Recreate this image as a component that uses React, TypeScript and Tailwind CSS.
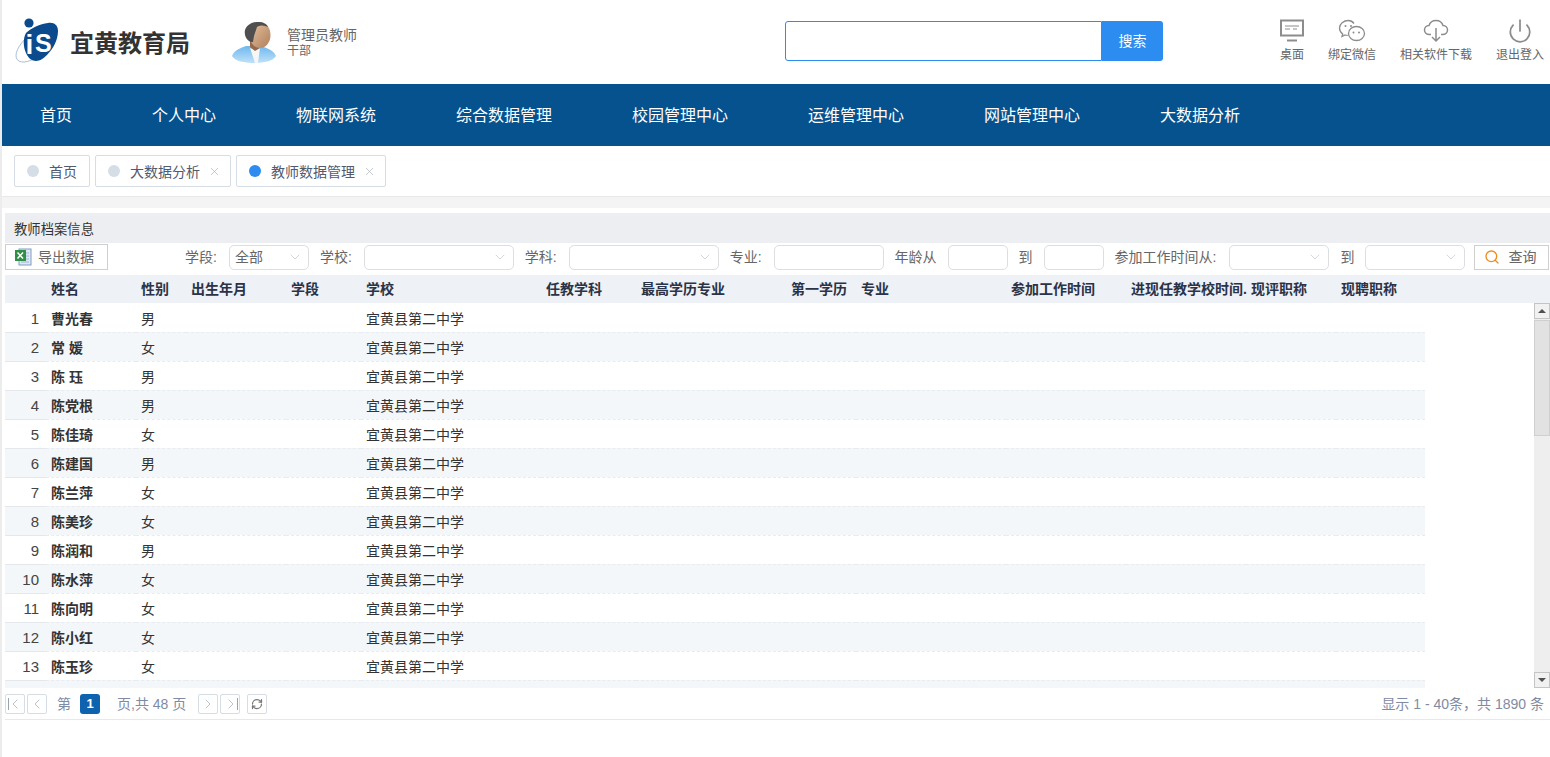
import { ChevronDown, ChevronLeft, ChevronRight, Power, RefreshCw, Search, X } from "lucide-react";

const font = { fontFamily: '"Liberation Sans", "Noto Sans CJK SC", sans-serif' };

const navItems = ["首页", "个人中心", "物联网系统", "综合数据管理", "校园管理中心", "运维管理中心", "网站管理中心", "大数据分析"];

const columns = [
  { label: "", w: 41 },
  { label: "姓名", w: 90 },
  { label: "性别", w: 50 },
  { label: "出生年月", w: 100 },
  { label: "学段", w: 75 },
  { label: "学校", w: 180 },
  { label: "任教学科", w: 95 },
  { label: "最高学历专业", w: 150 },
  { label: "第一学历", w: 70 },
  { label: "专业", w: 150 },
  { label: "参加工作时间", w: 120 },
  { label: "进现任教学校时间.", w: 120 },
  { label: "现评职称", w: 90 },
  { label: "现聘职称", w: 89 },
];

const teachers: [string, string][] = [
  ["曹光春", "男"],
  ["常 媛", "女"],
  ["陈 珏", "男"],
  ["陈党根", "男"],
  ["陈佳琦", "女"],
  ["陈建国", "男"],
  ["陈兰萍", "女"],
  ["陈美珍", "女"],
  ["陈润和", "男"],
  ["陈水萍", "女"],
  ["陈向明", "女"],
  ["陈小红", "女"],
  ["陈玉珍", "女"],
];

function Logo() {
  return (
    <svg width="48" height="48" viewBox="0 0 48 48" className="shrink-0">
      <ellipse cx="23" cy="29" rx="23" ry="11" transform="rotate(-40 23 29)" fill="none" stroke="#9db4cc" strokeWidth="0.8" />
      <path d="M14 17c5-5 14-9 22-10 6-1 10 2 10 8 0 9-5 18-11 24-3 3-7 6-11 6-4 0-8-3-10-8-3-6-3-15 0-20z" fill="#0b4a8c" />
      <circle cx="17" cy="7" r="4.600" fill="#0b4a8c" />
      <text x="13.500" y="38" fontSize="28" fontWeight="700" fill="#fff" style={{ fontFamily: '"Liberation Sans", sans-serif' }}>i</text>
      <text x="23" y="36" fontSize="25" fontWeight="700" fill="#fff" style={{ fontFamily: '"Liberation Sans", sans-serif' }}>S</text>
    </svg>
  );
}

function Avatar() {
  return (
    <svg width="44" height="44" viewBox="0 0 44 44" className="shrink-0">
      <defs>
        <linearGradient id="skin" x1="0" y1="0" x2="1" y2="1">
          <stop offset="0" stopColor="#e6c4a2" />
          <stop offset="1" stopColor="#b07f5a" />
        </linearGradient>
        <linearGradient id="shirt" x1="0" y1="0" x2="0" y2="1">
          <stop offset="0" stopColor="#6db8ee" />
          <stop offset="1" stopColor="#c0e1f8" />
        </linearGradient>
      </defs>
      <path d="M0 35c2-6 9-8 14-10h15c5 2 13 4 15 10-3 5-12 7-22 7S3 40 0 35z" fill="url(#shirt)" />
      <path d="M18 27l5 15h3l2-15-5 2z" fill="#f6f6f6" />
      <path d="M18 19h10v8l-5 3-5-4z" fill="#96694a" />
      <ellipse cx="28" cy="14" rx="10.500" ry="13" fill="url(#skin)" />
      <path d="M17 20c-3-2-5-6-4-11 2-5 7-8 13-8 5 0 9 2 10 5-4-2-8-2-11 0-1 3-2 6-3 9l-1 6c-2 0-3 0-4-1z" fill="#4f4f4f" />
    </svg>
  );
}

function HeaderIcon({ label, children }: { label: string; children: React.ReactNode }) {
  return (
    <div className="flex flex-col items-center">
      <div className="h-[27px] flex items-center justify-center text-[#8c8c8c]">{children}</div>
      <span className="text-[12px] leading-[16px] text-[#666] mt-[3px]">{label}</span>
    </div>
  );
}

function Tab({ label, active, closable }: { label: string; active?: boolean; closable?: boolean }) {
  return (
    <div className="h-8 flex items-center border border-[#d7dde4] rounded-[2px] bg-white pl-3 pr-3">
      <span className={active ? "w-3 h-3 rounded-full bg-[#2d8cf0]" : "w-3 h-3 rounded-full bg-[#d5dee6]"} />
      <span className="ml-[10px] mt-[3px] text-[14px] text-[#515a6e]">{label}</span>
      {closable && <X className="ml-2 w-[13px] h-[13px] text-[#a8aeb8] -mr-[3px]" strokeWidth={1.2} />}
    </div>
  );
}

function Label({ extra, children }: { extra?: string; children: React.ReactNode }) {
  return <span className={`text-[14px] text-[#666] whitespace-nowrap ${extra ?? ""}`}>{children}</span>;
}

function Select({ width, value }: { width: string; value?: string }) {
  return (
    <div className={`${width} h-[25px] flex items-center justify-between border border-[#dddee1] rounded-[5px] bg-white pl-[5px] pr-[5px] text-[14px] text-[#666]`}>
      <span>{value}</span>
      <ChevronDown className="w-4 h-4 text-[#c9cdd8]" strokeWidth={1.2} />
    </div>
  );
}

function TextBox({ width }: { width: string }) {
  return <div className={`${width} h-[25px] border border-[#dddee1] rounded-[5px] bg-white`} />;
}

function PageButton({ children }: { children: React.ReactNode }) {
  return <div className="w-5 h-5 flex items-center justify-center border border-[#d7dde4] rounded-[2px] text-[#9aa3b2]">{children}</div>;
}

function ScrollArrow({ up }: { up?: boolean }) {
  return (
    <div className="h-4 shrink-0 flex items-center justify-center bg-[#f1f1f1] border border-[#c4c4c4]">
      <span className={up ? "border-x-[4px] border-x-transparent border-b-[4px] border-b-[#505050]" : "border-x-[4px] border-x-transparent border-t-[4px] border-t-[#505050]"} />
    </div>
  );
}

export default function App() {
  return (
    <div style={font} className="h-[757px] w-[1550px] overflow-hidden bg-white border-l-2 border-[#ececec] flex flex-col">
      <header className="h-[84px] shrink-0 flex items-center">
        <div className="ml-[10px] -mt-[4px]"><Logo /></div>
        <h1 className="ml-[10px] text-[24px] font-bold text-[#333] whitespace-nowrap mt-[4px]">宜黄教育局</h1>
        <div className="ml-[42px] mt-[1px]"><Avatar /></div>
        <div className="ml-[11px] text-[14px] leading-[16px] text-[#666] mt-[2px]">
          <div>管理员教师</div>
          <div className="text-[12px]">干部</div>
        </div>
        <div className="ml-[428px] w-[378px] h-10 flex -mt-[2px]">
          <div className="flex-1 border border-[#2d8cf0] rounded-l-[3px]" />
          <button className="w-[61px] bg-[#2d8cf0] text-white text-[14px] rounded-r-[3px]">搜索</button>
        </div>
        <div className="ml-auto mr-[6px] flex gap-6 -mt-[4px]">
          <HeaderIcon label="桌面">
            <svg width="24" height="24" viewBox="0 0 24 24" fill="none" stroke="currentColor">
              <rect x="1" y="1.500" width="22" height="15" strokeWidth="2" />
              <path d="M5 7h14M5 10h5M13 10h4" strokeWidth="1.200" />
              <path d="M7 21.500h10" strokeWidth="2" />
            </svg>
          </HeaderIcon>
          <HeaderIcon label="绑定微信">
            <svg width="28" height="24" viewBox="0 0 28 24" fill="none" stroke="currentColor" strokeWidth="1.300">
              <path d="M16 4.500C14.500 2.500 12.500 1.500 10.500 1.500 5.500 1.500 1.500 5 1.500 9c0 2.500 1.200 4.500 3.200 6l-.7 2.500 3-1.500c1 .3 1.800.4 2.800.4" />
              <ellipse cx="18.500" cy="14.500" rx="8" ry="7" fill="#fff" />
              <circle cx="7.500" cy="7" r="1" fill="currentColor" stroke="none" />
              <circle cx="13" cy="7" r="1" fill="currentColor" stroke="none" />
              <circle cx="15.500" cy="13.500" r="1" fill="currentColor" stroke="none" />
              <circle cx="21" cy="13.500" r="1" fill="currentColor" stroke="none" />
            </svg>
          </HeaderIcon>
          <HeaderIcon label="相关软件下载">
            <svg width="26" height="24" viewBox="0 0 26 24" fill="none" stroke="currentColor" strokeWidth="1.500">
              <path d="M8 15.500H6.500C3.500 15.500 1.500 13.500 1.500 11s2-4.500 4.500-4.500C7 3.500 9.500 1.500 13 1.500s6 2 7 5c2.500 0 4.500 2 4.500 4.500s-2 4.500-5 4.500H18" />
              <path d="M13 9v13M9 18l4 4 4-4" />
            </svg>
          </HeaderIcon>
          <HeaderIcon label="退出登入">
            <Power className="w-[26px] h-[26px]" strokeWidth={1.600} />
          </HeaderIcon>
        </div>
      </header>

      <nav className="h-[62px] shrink-0 bg-[#05528f] flex items-center pl-[38px] gap-20 pt-[1px]">
        {navItems.map((item) => (
          <a key={item} className="text-[16px] text-white whitespace-nowrap">{item}</a>
        ))}
      </nav>

      <div className="h-[51px] shrink-0 flex items-center pl-3 gap-[5px] border-b border-[#e8e8e8]">
        <Tab label="首页" />
        <Tab label="大数据分析" closable />
        <Tab label="教师数据管理" active closable />
      </div>
      <div className="h-[11px] shrink-0 bg-[#f4f4f4]" />

      <main className="flex-1 min-h-0 flex flex-col pt-[5px] pl-[3px]">
        <div className="h-[30px] shrink-0 flex items-center bg-[#eceef2] pl-[9px] pt-[3px] text-[13.33px] text-[#333]">教师档案信息</div>

        <div className="h-[32px] shrink-0 flex items-center gap-[11px] pb-[5px] pt-[1px]">
          <button className="w-[103px] h-[26px] shrink-0 flex items-center border border-[#cfcfcf] pl-2 mr-[66px]">
            <svg width="18" height="18" viewBox="0 0 18 18">
              <rect x="5" y="1" width="12" height="16" fill="#dfe8f6" stroke="#7f9cc4" />
              <path d="M7 5h8M7 8h8M7 11h8M7 14h8" stroke="#9db4d4" />
              <rect x="1" y="2" width="11" height="11" fill="#2f8f46" />
              <path d="M3.500 4.500l5.500 6M9 4.500l-5.500 6" stroke="#fff" strokeWidth="1.500" />
            </svg>
            <span className="ml-[6px] text-[14px] text-[#666]">导出数据</span>
          </button>
          <Label extra="pr-px">学段:</Label>
          <Select width="w-[80px]" value="全部" />
          <Label extra="pr-px">学校:</Label>
          <Select width="w-[150px]" />
          <Label extra="pr-px">学科:</Label>
          <Select width="w-[150px]" />
          <Label extra="pr-px">专业:</Label>
          <TextBox width="w-[110px]" />
          <Label>年龄从</Label>
          <TextBox width="w-[60px]" />
          <Label>到</Label>
          <TextBox width="w-[60px]" />
          <Label extra="pr-[2px]">参加工作时间从:</Label>
          <Select width="w-[100px]" />
          <Label>到</Label>
          <Select width="w-[100px]" />
          <button className="w-[75px] h-[25px] shrink-0 -ml-[2px] flex items-center border border-[#cfcfcf] pl-[9px]">
            <Search className="w-4 h-4 text-[#f08a1d]" strokeWidth={2} />
            <span className="ml-[8px] text-[14px] text-[#666]">查询</span>
          </button>
        </div>

        <table className="w-[1545px] shrink-0 table-fixed border-collapse bg-[#eef1f5]">
          <colgroup>
            {columns.map((c, i) => (
              <col key={i} style={{ width: c.w }} />
            ))}
            <col />
          </colgroup>
          <thead>
            <tr className="h-[28px]">
              {columns.map((c, i) => (
                <th key={i} className="px-[5px] text-left text-[14px] font-bold text-[#2a3347] whitespace-nowrap">
                  {c.label}
                </th>
              ))}
              <th />
            </tr>
          </thead>
        </table>

        <div className="h-[385px] shrink-0 flex overflow-hidden">
          <div className="flex-1 overflow-hidden">
            <table className="w-[1420px] table-fixed border-collapse">
              <colgroup>
                {columns.map((c, i) => (
                  <col key={i} style={{ width: c.w }} />
                ))}
              </colgroup>
              <tbody>
                {teachers.map(([name, gender], i) => (
                  <tr key={i} className={i % 2 ? "h-[29px] bg-[#f4f7fa]" : "h-[29px] bg-white"}>
                    <td className="pr-[7px] pt-[3px] text-right text-[15px] text-[#444] border-b border-[#e4e7ec]">{i + 1}</td>
                    <td className="px-[5px] pt-[4px] text-[14px] font-bold text-[#333] border-b border-dashed border-[#e8ecf0] whitespace-nowrap">{name}</td>
                    <td className="px-[5px] pt-[4px] text-[14px] text-[#333] border-b border-dashed border-[#e8ecf0]">{gender}</td>
                    <td className="border-b border-dashed border-[#e8ecf0]" />
                    <td className="border-b border-dashed border-[#e8ecf0]" />
                    <td className="px-[5px] pt-[4px] text-[14px] text-[#333] border-b border-dashed border-[#e8ecf0] whitespace-nowrap">宜黄县第二中学</td>
                    {columns.slice(6).map((c) => (
                      <td key={c.label} className="border-b border-dashed border-[#e8ecf0]" />
                    ))}
                  </tr>
                ))}
                <tr className="h-[29px] bg-[#f4f7fa]">
                  <td colSpan={columns.length} />
                </tr>
              </tbody>
            </table>
          </div>
          <div className="w-4 shrink-0 flex flex-col bg-[#eeeeee]">
            <ScrollArrow up />
            <div className="h-[116px] shrink-0 mt-[1px] bg-[#e2e2e2] border border-[#cfcfcf]" />
            <div className="flex-1" />
            <ScrollArrow />
          </div>
        </div>

        <div className="h-[32px] shrink-0 flex items-center border-b border-[#e8e8e8] text-[14px] text-[#7f8ba3]">
          <div className="flex gap-[2px]">
            <PageButton><span className="flex items-center"><span className="w-px h-3 bg-[#9aa3b2]" /><ChevronLeft className="w-4 h-4 -ml-[2px]" strokeWidth={1} /></span></PageButton>
            <PageButton><ChevronLeft className="w-4 h-4" strokeWidth={1} /></PageButton>
          </div>
          <span className="ml-[10px] mt-[2px]">第</span>
          <span className="ml-[9px] w-5 h-5 rounded-[3px] bg-[#0f62ad] text-white text-[13px] font-bold flex items-center justify-center">1</span>
          <span className="ml-[17px] mt-[2px]">页,共 48 页</span>
          <div className="ml-3 flex gap-[2px]">
            <PageButton><ChevronRight className="w-4 h-4" strokeWidth={1} /></PageButton>
            <PageButton><span className="flex items-center"><ChevronRight className="w-4 h-4 -mr-[2px]" strokeWidth={1} /><span className="w-px h-3 bg-[#9aa3b2]" /></span></PageButton>
          </div>
          <div className="ml-[7px]">
            <PageButton><RefreshCw className="w-3 h-3 text-[#777]" strokeWidth={2.500} /></PageButton>
          </div>
          <span className="ml-auto mr-[6px] mt-[2px]">显示 1 - 40条，共 1890 条</span>
        </div>
      </main>
    </div>
  );
}
